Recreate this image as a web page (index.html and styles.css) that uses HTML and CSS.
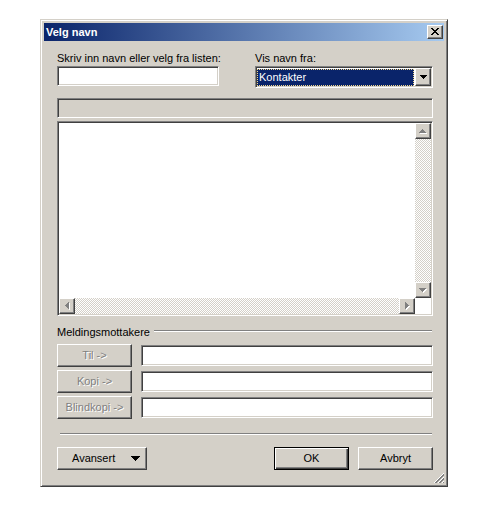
FILE: index.html
```html
<!DOCTYPE html>
<html lang="no">
<head>
<meta charset="utf-8">
<title>Velg navn</title>
<link rel="stylesheet" href="styles.css">
</head>
<body>
<div class="window">
  <div class="titlebar">
    <span class="title">Velg navn</span>
    <div class="raised close">
      <svg width="8" height="7" viewBox="0 0 8 7" shape-rendering="crispEdges"><path fill="#000" d="M0 0h2v1H0zM6 0h2v1H6zM1 1h2v1H1zM5 1h2v1H5zM2 2h4v1H2zM3 3h2v1H3zM2 4h4v1H2zM1 5h2v1H1zM5 5h2v1H5zM0 6h2v1H0zM6 6h2v1H6z"/></svg>
    </div>
  </div>
  <div class="client">
    <div class="toprow">
      <div class="field">
        <div class="label">Skriv inn navn eller velg fra listen:</div>
        <div class="sunken edit"></div>
      </div>
      <div class="field">
        <div class="label">Vis navn fra:</div>
        <div class="sunken combo">
          <div class="combo-sel"><span>Kontakter</span></div>
          <div class="raised combo-btn">
            <svg width="7" height="4" viewBox="0 0 7 4" shape-rendering="crispEdges"><path fill="#000" d="M0 0h7v1H0zM1 1h5v1H1zM2 2h3v1H2zM3 3h1v1H3z"/></svg>
          </div>
        </div>
      </div>
    </div>

    <div class="sunken headerbar"></div>

    <div class="sunken listbox">
      <div class="list-area"></div>
      <div class="vscroll">
        <div class="raised sbtn">
          <svg width="8" height="5" viewBox="0 0 8 5" shape-rendering="crispEdges"><path fill="#fff" d="M4 1h1v1H4zM3 2h3v1H3zM2 3h5v1H2zM1 4h7v1H1z"/><path fill="#808080" d="M3 0h1v1H3zM2 1h3v1H2zM1 2h5v1H1zM0 3h7v1H0z"/></svg>
        </div>
        <div class="track"></div>
        <div class="raised sbtn">
          <svg width="8" height="5" viewBox="0 0 8 5" shape-rendering="crispEdges"><path fill="#fff" d="M1 1h7v1H1zM2 2h5v1H2zM3 3h3v1H3zM4 4h1v1H4z"/><path fill="#808080" d="M0 0h7v1H0zM1 1h5v1H1zM2 2h3v1H2zM3 3h1v1H3z"/></svg>
        </div>
      </div>
      <div class="hscroll">
        <div class="raised sbtn">
          <svg width="5" height="8" viewBox="0 0 5 8" shape-rendering="crispEdges"><path fill="#fff" d="M1 4h1v1H1zM2 3h1v3H2zM3 2h1v5H3zM4 1h1v7H4z"/><path fill="#808080" d="M0 3h1v1H0zM1 2h1v3H1zM2 1h1v5H2zM3 0h1v7H3z"/></svg>
        </div>
        <div class="track"></div>
        <div class="raised sbtn">
          <svg width="5" height="8" viewBox="0 0 5 8" shape-rendering="crispEdges"><path fill="#fff" d="M1 1h1v7H1zM2 2h1v5H2zM3 3h1v3H3zM4 4h1v1H4z"/><path fill="#808080" d="M0 0h1v7H0zM1 1h1v5H1zM2 2h1v3H2zM3 3h1v1H3z"/></svg>
        </div>
      </div>
      <div class="corner"></div>
    </div>

    <div class="grouprow">
      <span>Meldingsmottakere</span>
      <div class="etched"></div>
    </div>

    <div class="recipients">
      <div class="rrow">
        <div class="raised btn disabled">Til -&gt;</div>
        <div class="sunken redit"></div>
      </div>
      <div class="rrow">
        <div class="raised btn disabled">Kopi -&gt;</div>
        <div class="sunken redit"></div>
      </div>
      <div class="rrow">
        <div class="raised btn disabled">Blindkopi -&gt;</div>
        <div class="sunken redit"></div>
      </div>
    </div>

    <div class="etched separator"></div>

    <div class="bottomrow">
      <div class="raised btn adv">
        <span>Avansert</span>
        <svg width="9" height="5" viewBox="0 0 9 5" shape-rendering="crispEdges"><path fill="#000" d="M0 0h9v1H0zM1 1h7v1H1zM2 2h5v1H2zM3 3h3v1H3zM4 4h1v1H4z"/></svg>
      </div>
      <div class="raised btn default">OK</div>
      <div class="raised btn">Avbryt</div>
    </div>

    <svg class="grip" width="12" height="12" viewBox="0 0 12 12" shape-rendering="crispEdges">
      <polygon fill="#fff" points="12,1 12,2 2,12 1,12"/>
      <polygon fill="#808080" points="12,2 12,4 4,12 2,12"/>
      <polygon fill="#fff" points="12,5 12,6 6,12 5,12"/>
      <polygon fill="#808080" points="12,6 12,8 8,12 6,12"/>
      <polygon fill="#fff" points="12,9 12,10 10,12 9,12"/>
      <polygon fill="#808080" points="12,10 12,12 10,12"/>
    </svg>
  </div>
</div>
</body>
</html>
```
FILE: styles.css
```css
* { box-sizing: border-box; }
html, body { margin: 0; padding: 0; background: #fff; }
body {
  font-family: "Liberation Sans", Arial, sans-serif;
  font-size: 11px;
  line-height: 13px;
  color: #000;
}

.window {
  margin: 19px 0 0 40px;
  width: 408px;
  height: 468px;
  background: #d4d0c8;
  border: 1px solid;
  border-color: #d4d0c8 #404040 #404040 #d4d0c8;
  box-shadow: inset 1px 1px #fff, inset -1px -1px #808080;
  padding: 3px;
  display: flex;
  flex-direction: column;
}

.raised {
  background: #d4d0c8;
  border: 1px solid;
  border-color: #fff #404040 #404040 #fff;
  box-shadow: inset -1px -1px #808080;
}
.sunken {
  border: 1px solid;
  border-color: #808080 #fff #fff #808080;
  box-shadow: inset 1px 1px #404040, inset -1px -1px #d4d0c8;
}

.titlebar {
  height: 18px;
  flex: none;
  background: linear-gradient(to right, #0a246a, #a6caf0);
  display: flex;
  align-items: center;
  justify-content: space-between;
  padding: 0 1px 0 2px;
}
.title {
  color: #fff;
  font-weight: bold;
  line-height: 18px;
}
.close {
  width: 16px;
  height: 14px;
  display: flex;
  align-items: center;
  justify-content: center;
  padding: 0 1px 1px 0;
}
.close svg { display: block; }

.client {
  flex: 1;
  position: relative;
  display: flex;
  flex-direction: column;
  padding: 11px 11px 0 13px;
}

.toprow {
  display: grid;
  grid-template-columns: 162px 178px;
  column-gap: 36px;
}
.label { height: 13px; margin-bottom: 1px; white-space: nowrap; }
.edit { height: 20px; background: #fff; }

.combo {
  height: 22px;
  background: #fff;
  padding: 1px;
  display: flex;
}
.combo-sel {
  flex: 1;
  margin: 1px 1px 0 0;
  background: #0a246a;
  color: #fff;
  outline: 1px dotted #f2d88c;
  outline-offset: -1px;
  padding-left: 2px;
  display: flex;
  align-items: center;
}
.combo-btn {
  width: 16px;
  display: flex;
  align-items: center;
  justify-content: center;
}
.combo-btn svg, .sbtn svg, .adv svg { display: block; }

.headerbar {
  margin-top: 10px;
  height: 20px;
  background: #d4d0c8;
}

.listbox {
  margin-top: 3px;
  height: 195px;
  background: #fff;
  padding: 1px;
  display: grid;
  grid-template-columns: 1fr 16px;
  grid-template-rows: 1fr 16px;
}
.vscroll { display: flex; flex-direction: column; }
.hscroll { display: flex; }
.sbtn {
  width: 16px;
  height: 16px;
  flex: none;
  display: flex;
  align-items: center;
  justify-content: center;
}
.track {
  flex: 1;
  background: repeating-conic-gradient(#fff 0 25%, #d4d0c8 0 50%) 0 0 / 2px 2px;
}
.corner { background: #fff; }

.grouprow {
  margin-top: 10px;
  height: 13px;
  display: flex;
  align-items: flex-start;
}
.etched {
  height: 2px;
  border-top: 1px solid #808080;
  border-bottom: 1px solid #fff;
}
.grouprow .etched { flex: 1; margin: 4px 1px 0 4px; }

.recipients {
  margin-top: 5px;
  display: flex;
  flex-direction: column;
  gap: 3px;
}
.rrow { display: flex; align-items: center; height: 23px; }

.btn {
  height: 23px;
  width: 75px;
  flex: none;
  display: flex;
  align-items: center;
  justify-content: center;
}
.disabled {
  color: #808080;
  text-shadow: 1px 1px #fff;
}
.redit {
  flex: 1;
  margin-left: 9px;
  height: 21px;
  background: #fff;
}

.separator { margin: 14px 1px 0 3px; }

.bottomrow {
  margin-top: 12px;
  display: flex;
  gap: 9px;
}
.adv {
  width: 90px;
  justify-content: flex-start;
  padding-left: 14px;
  margin-right: auto;
}
.adv svg { margin-left: 16px; }
.default {
  border-color: #000;
  box-shadow: inset 1px 1px #fff, inset -1px -1px #404040, inset -2px -2px #808080;
}

.grip {
  position: absolute;
  right: 0;
  bottom: 0;
  display: block;
}
```
